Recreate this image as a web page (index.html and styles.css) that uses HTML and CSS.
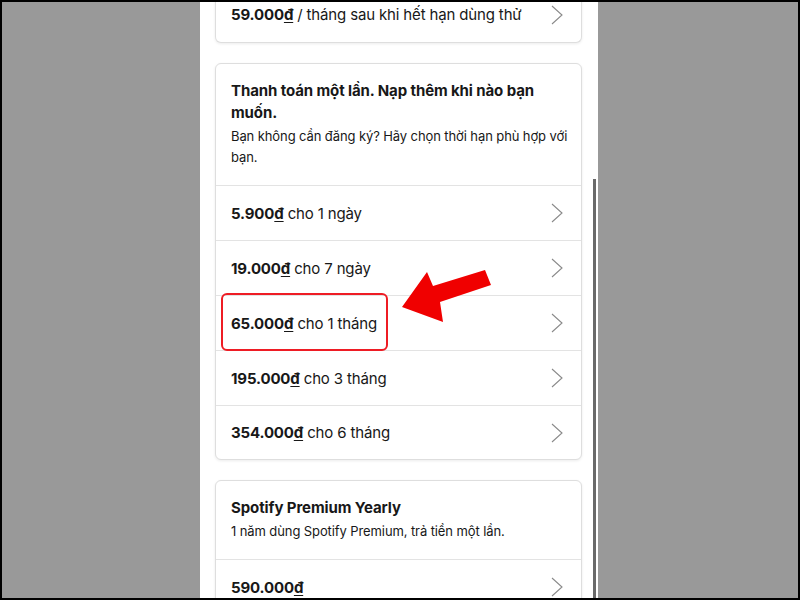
FILE: index.html
```html
<!DOCTYPE html>
<html lang="vi">
<head>
<meta charset="utf-8">
<link rel="stylesheet" href="styles.css">
</head>
<body>
<div class="frame">
  <div class="panel">
    <div class="content">
      <div class="card card-top">
        <div class="row"><span class="label"><b>59.000<span class="u">đ</span></b> / tháng sau khi hết hạn dùng thử</span><svg class="chev" viewBox="0 0 12 20"><path d="M1 1 L11 10 L1 19"/></svg></div>
      </div>
      <div class="card">
        <div class="head">
          <div class="title">Thanh toán một lần. Nạp thêm khi nào bạn muốn.</div>
          <div class="sub">Bạn không cần đăng ký? Hãy chọn thời hạn phù hợp với bạn.</div>
        </div>
        <div class="row"><span class="label"><b>5.900<span class="u">đ</span></b> cho 1 ngày</span><svg class="chev" viewBox="0 0 12 20"><path d="M1 1 L11 10 L1 19"/></svg></div>
        <div class="row"><span class="label"><b>19.000<span class="u">đ</span></b> cho 7 ngày</span><svg class="chev" viewBox="0 0 12 20"><path d="M1 1 L11 10 L1 19"/></svg></div>
        <div class="row"><span class="label"><b>65.000<span class="u">đ</span></b> cho 1 tháng</span><svg class="chev" viewBox="0 0 12 20"><path d="M1 1 L11 10 L1 19"/></svg></div>
        <div class="row"><span class="label"><b>195.000<span class="u">đ</span></b> cho 3 tháng</span><svg class="chev" viewBox="0 0 12 20"><path d="M1 1 L11 10 L1 19"/></svg></div>
        <div class="row last"><span class="label"><b>354.000<span class="u">đ</span></b> cho 6 tháng</span><svg class="chev" viewBox="0 0 12 20"><path d="M1 1 L11 10 L1 19"/></svg></div>
      </div>
      <div class="card">
        <div class="head">
          <div class="title">Spotify Premium Yearly</div>
          <div class="sub">1 năm dùng Spotify Premium, trả tiền một lần.</div>
        </div>
        <div class="row"><span class="label"><b>590.000<span class="u">đ</span></b></span><svg class="chev" viewBox="0 0 12 20"><path d="M1 1 L11 10 L1 19"/></svg></div>
      </div>
    </div>
    <div class="scrollbar"></div>
  </div>
  <div class="highlight"></div>
  <svg class="arrow" viewBox="0 0 800 600"><polygon points="402,307 427,272 433,286 485,270 491,285 440,302 443,322"/></svg>
</div>
</body>
</html>
```
FILE: styles.css
```css
* { box-sizing: border-box; }
html, body { margin: 0; padding: 0; }
body {
  width: 800px;
  height: 600px;
  overflow: hidden;
  font-family: "Inter", "Liberation Sans", sans-serif;
  color: #181818;
}
.frame {
  position: relative;
  width: 800px;
  height: 600px;
  border: 2px solid #000;
  background: #999999;
  overflow: hidden;
}
.panel {
  position: relative;
  margin-left: 198px;
  width: 398px;
  margin-top: -2px;
  height: 598px;
  background: #fff;
  overflow: hidden;
}
.content {
  display: flex;
  flex-direction: column;
  gap: 20px;
  padding: 0 16px 0 15px;
}
.card {
  background: #fff;
  border: 1px solid #dedede;
  border-radius: 6px;
  box-shadow: 0 1px 3px rgba(0,0,0,0.08);
  overflow: hidden;
}
.card-top {
  margin-top: -13px;
  border-top: none;
}
.card-top .row { border-top: none; }
.head {
  padding: 16px 5px 17px 15px;
}
.title {
  font-size: 15px;
  font-weight: 700;
  line-height: 22px;
  letter-spacing: -0.1px;
  padding-right: 10px;
}
.sub {
  margin-top: 2px;
  font-size: 13px;
  line-height: 21px;
  letter-spacing: -0.1px;
}
.row {
  display: flex;
  align-items: center;
  justify-content: space-between;
  height: 55px;
  padding: 0 18px 0 15px;
  border-top: 1px solid #e3e3e3;
  font-size: 15px;
  letter-spacing: -0.15px;
}
.row.last { height: 54px; }
.label b { font-weight: 700; }
.u { text-decoration: underline; text-underline-offset: 2px; }
.chev {
  width: 12px;
  height: 20px;
  fill: none;
  stroke: #8a8a8a;
  stroke-width: 1.1;
}
.scrollbar {
  position: absolute;
  left: 393px;
  top: 179px;
  width: 3px;
  height: 430px;
  background: #6a6a6a;
}
.highlight {
  position: absolute;
  left: 219px;
  top: 291px;
  width: 167px;
  height: 58px;
  border: 2px solid #ee1c24;
  border-radius: 6px;
}
.arrow {
  position: absolute;
  left: -2px;
  top: -2px;
  width: 800px;
  height: 600px;
  fill: #f00000;
}
```
